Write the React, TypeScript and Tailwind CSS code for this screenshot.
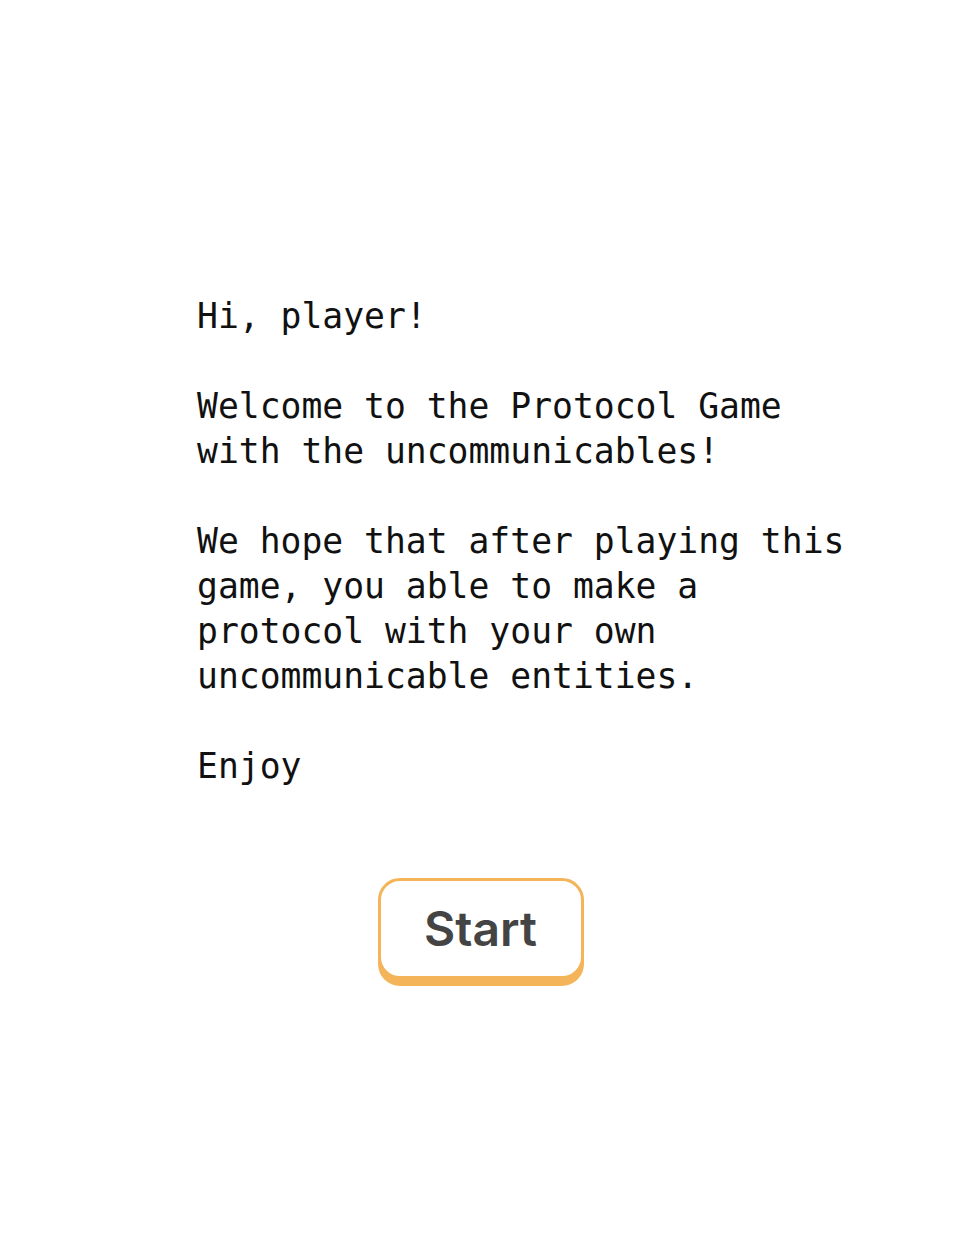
import React from "react";

const paragraphs: string[][] = [
  ["Hi, player!"],
  ["Welcome to the Protocol Game", "with the uncommunicables!"],
  [
    "We hope that after playing this",
    "game, you able to make a",
    "protocol with your own",
    "uncommunicable entities.",
  ],
  ["Enjoy"],
];

export default function App() {
  return (
    <div className="min-h-[1258px] w-full bg-white">
      <div className="flex flex-col pt-[294px]">
        <div
          className="flex flex-col gap-[45px] pl-[197px] text-[34.7px] leading-[45px] text-[#111]"
          style={{ fontFamily: '"DejaVu Sans Mono", "Liberation Mono", monospace' }}
        >
          {paragraphs.map((lines, i) => (
            <p key={i} className="whitespace-pre">
              {lines.map((l, j) => (
                <span key={j} className="block">
                  {l}
                </span>
              ))}
            </p>
          ))}
        </div>
        <div className="flex justify-center pt-[89px] pr-[1px]">
          <button
            className="flex h-[101px] w-[206px] items-center justify-center rounded-[22px] border-[3px] border-[#f4b45a] bg-white text-[48px] font-semibold text-[#444] shadow-[0_7px_0_#f4b45a]"
            style={{ fontFamily: "Inter, sans-serif" }}
          >
            Start
          </button>
        </div>
      </div>
    </div>
  );
}
